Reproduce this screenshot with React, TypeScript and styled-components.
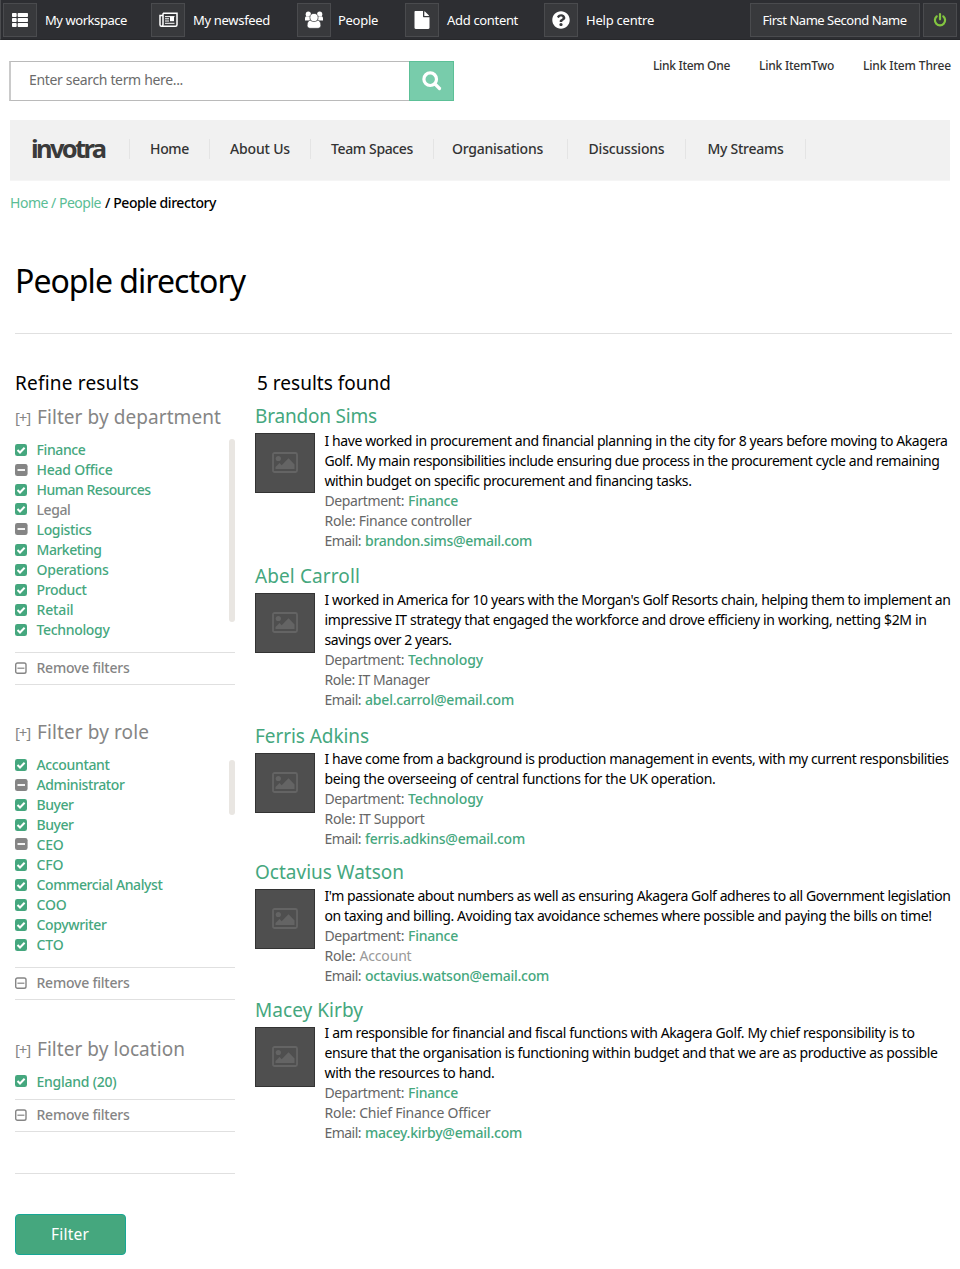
import React, { useLayoutEffect, useRef, useState } from "react";
import styled, { createGlobalStyle } from "styled-components";
import { FaThList, FaQuestionCircle } from "react-icons/fa";

const green = "#45a77e";
const grey = "#858585";

const GlobalStyle = createGlobalStyle`
  * { box-sizing: border-box; }
  body {
    margin: 0;
    background: #fff;
    color: #000;
    font-family: "Noto Sans", "Open Sans", sans-serif;
    font-size: 14px;
    line-height: 20px;
  }
  h1, h2, h3, p, ul { margin: 0; padding: 0; font-weight: 400; }
  ul { list-style: none; }
`;

/* A line of text tracked in or out so that it fills a given measure. */
const Line = styled.span<{ $width: number }>`
  display: block;
  flex: none;
  width: ${(p) => p.$width}px;
  white-space: nowrap;
`;

function Fit({ w, children }: { w: number; children: string }) {
  const ref = useRef<HTMLSpanElement>(null);
  const [tracking, setTracking] = useState(0);
  useLayoutEffect(() => {
    const el = ref.current;
    if (!el) return;
    const natural = el.getBoundingClientRect().width - tracking * children.length;
    setTracking((w - 1 - natural) / children.length);
  }, [w, children]);
  return (
    <Line $width={w}>
      <span ref={ref} style={{ letterSpacing: `${tracking}px` }}>
        {children}
      </span>
    </Line>
  );
}

const Page = styled.div`
  width: 960px;
  height: 1269px;
  overflow: hidden;
`;

/* ---------- top bar ---------- */

const TopBar = styled.div`
  display: flex;
  height: 40px;
  padding: 3px 3px 3px 2px;
  background: #2d2e32;
  border-left: 1px solid #4b4c4f;
  border-bottom: 1px solid #27282b;
  color: #fff;
  font-size: 13px;
`;

const Shortcut = styled.div<{ $width: number; $gap: number }>`
  display: flex;
  align-items: center;
  gap: ${(p) => p.$gap}px;
  width: ${(p) => p.$width}px;
  height: 34px;
`;

const Tile = styled.div<{ $width?: number; $color?: string }>`
  display: flex;
  flex: none;
  align-items: center;
  justify-content: center;
  width: ${(p) => p.$width ?? 34}px;
  height: 34px;
  background: #38393c;
  border: 1px solid #4a4b4e;
  color: ${(p) => p.$color ?? "#fff"};
`;

const Account = styled.div`
  display: flex;
  gap: 3px;
  margin-left: auto;
`;

const NewsIcon = () => (
  <svg width="19" height="16" viewBox="0 0 19 16" fill="none" stroke="#fff" strokeWidth="1.500">
    <path d="M4 1.200h14v11.600c0 1-.6 1.500-1.500 1.500h-14C1.500 14.300 1 13.700 1 12.800V3.400h3M4 1.200v11.300c0 1-.4 1.700-1.400 1.800" />
    <rect x="11" y="4.800" width="4" height="4.400" fill="#fff" stroke="none" />
    <path d="M6 4.600h9.500M6 6.800h4M6 9h4M6 11.300h9.500" strokeWidth="1" />
  </svg>
);

const PeopleIcon = () => (
  <svg width="20" height="18" viewBox="0 0 20 18" fill="#fff">
    <circle cx="4.3" cy="3.2" r="2.6" />
    <circle cx="15.7" cy="3.2" r="2.6" />
    <path d="M1 9.5V7.8C1 6 2 5.2 3 5.4c1.400.8 2.400.6 3.200.3L6 9.500z" />
    <path d="M19 9.500V7.800c0-1.800-1-2.600-2-2.400-1.400.8-2.400.6-3.200.3L14 9.500z" />
    <path
      d="M5.800 9.300C4 10 3.200 12 3.200 14.300c0 2 1.200 3 2.800 3h8c1.600 0 2.800-1 2.800-3 0-2.300-.8-4.300-2.600-5z"
      stroke="#38393c"
      strokeWidth=".6"
    />
    <circle cx="10" cy="6.500" r="4.100" stroke="#38393c" strokeWidth=".7" />
  </svg>
);

const FileIcon = () => (
  <svg width="16" height="18" viewBox="0 0 16 18" fill="#fff">
    <path d="M1.500 0H9v5.300c0 .6.400 1 1 1h5.500v10.400c0 .7-.5 1.200-1.200 1.200H1.700C1 17.900.5 17.400.5 16.700V1C.5.400.900 0 1.500 0z" />
    <path d="M10.300 0.200c.4.100.6.300.9.600l3.300 3.300c.3.300.5.600.6.900h-4.800z" />
  </svg>
);

const PowerIcon = () => (
  <svg width="14" height="14" viewBox="0 0 14 14" fill="none" stroke="currentColor" strokeWidth="2.200" strokeLinecap="round">
    <path d="M3.700 3.300a5.100 5.100 0 1 0 6.600 0M7 1.100v5.200" />
  </svg>
);

/* ---------- search and quick links ---------- */

const SearchRow = styled.div`
  display: flex;
  justify-content: space-between;
  height: 80px;
  padding: 21px 8px 0 9px;
`;

const SearchForm = styled.div`
  display: flex;
  height: 40px;
`;

const SearchField = styled.div`
  display: flex;
  align-items: center;
  width: 400px;
  padding: 0 0 3px 18px;
  border: 1px solid #bababa;
  border-left: 2px solid #cacaca;
  border-right: 0;
  color: #6b6b6b;
`;

const SearchButton = styled.div`
  display: flex;
  align-items: center;
  justify-content: center;
  width: 45px;
  background: #78ccab;
  border: 1px solid #5cc097;
`;

const QuickLinks = styled.div`
  display: flex;
  gap: 28px;
  height: 20px;
  margin-top: -6px;
  color: #333;
  font-size: 12px;
  font-weight: 500;
  line-height: 21px;
`;

/* ---------- main navigation ---------- */

const MainNav = styled.nav`
  display: flex;
  align-items: center;
  width: 940px;
  height: 61px;
  margin-left: 10px;
  padding: 0 0 2px 22px;
  background: #f1f1f1;
  border-bottom: 1px solid #f5f5f5;
  color: #333;
  font-weight: 500;
`;

const Logo = styled.svg`
  flex: none;
  width: 97px;
  height: 40px;
`;

const NavItem = styled.div<{ $width: number; $pad: number }>`
  width: ${(p) => p.$width}px;
  height: 20px;
  padding-left: ${(p) => p.$pad}px;
  border-left: 1px solid #e4e4e4;
`;

const Crumbs = styled.div`
  display: flex;
  gap: 3px;
  height: 20px;
  margin: 12px 0 0 10px;
`;

const CrumbLink = styled.div`
  color: #5abd95;
`;

const CrumbHere = styled.div`
  font-weight: 500;
`;

const Title = styled.h1`
  height: 44px;
  margin: 46px 15px 0;
  font-size: 32px;
  line-height: 44px;
`;

const Rule = styled.div<{ $top: number; $wide?: boolean }>`
  height: 1px;
  margin: ${(p) => p.$top}px 0 0 ${(p) => (p.$wide ? 15 : 0)}px;
  width: ${(p) => (p.$wide ? 937 : 220)}px;
  background: #e0e0e0;
`;

const Columns = styled.div`
  display: flex;
  gap: 20px;
  padding: 37px 0 0 15px;
`;

const ColumnTitle = styled.h2<{ $indent: number }>`
  height: 24px;
  padding-left: ${(p) => p.$indent}px;
  font-size: 19px;
  line-height: 24px;
`;

/* ---------- filters ---------- */

const Sidebar = styled.aside`
  width: 220px;
`;

const FilterTitle = styled.h3<{ $top: number }>`
  display: flex;
  gap: 6px;
  height: 24px;
  margin-top: ${(p) => p.$top}px;
  color: ${grey};
  font-size: 19px;
  line-height: 24px;
`;

const Toggle = styled.span`
  font-size: 15px;
`;

const FilterBody = styled.div<{ $top: number }>`
  display: flex;
  justify-content: space-between;
  margin-top: ${(p) => p.$top}px;
`;

const Option = styled.li<{ $muted?: boolean }>`
  display: flex;
  gap: 8.5px;
  height: 20px;
  color: ${(p) => (p.$muted ? grey : green)};
  font-weight: 500;
`;

const Mark = styled.svg<{ $raised?: boolean }>`
  flex: none;
  width: 13px;
  height: 13px;
  margin-top: ${(p) => (p.$raised ? 3 : 4)}px;
`;

const ScrollThumb = styled.div<{ $top: number; $height: number }>`
  width: 6px;
  height: ${(p) => p.$height}px;
  margin-top: ${(p) => p.$top}px;
  border-radius: 3px;
  background: #e9e6e2;
`;

const RemoveRow = styled.div<{ $top: number }>`
  display: flex;
  gap: 8.5px;
  height: 33px;
  margin-top: ${(p) => p.$top}px;
  padding-top: 5px;
  border: solid #e0e0e0;
  border-width: 1px 0;
  color: ${grey};
  font-weight: 500;
`;

const FilterButton = styled.div`
  display: flex;
  justify-content: center;
  width: 111px;
  height: 41px;
  margin-top: 40px;
  padding-top: 9px;
  border: 1px solid #17a795;
  border-radius: 4px;
  background: ${green};
  color: #fff;
  font-size: 15.5px;
`;

/* ---------- results ---------- */

const Results = styled.main`
  width: 705px;
`;

const PersonList = styled.div`
  margin-top: 9px;
`;

const Person = styled.article<{ $height: number }>`
  height: ${(p) => p.$height}px;
`;

const PersonName = styled.h3`
  height: 22px;
  color: ${green};
  font-size: 19px;
  line-height: 24px;
`;

const PersonBody = styled.div`
  display: flex;
  gap: 10px;
`;

const Thumb = styled.div`
  display: flex;
  align-items: center;
  justify-content: center;
  flex: none;
  width: 60px;
  height: 60px;
  margin-top: 7px;
  padding-bottom: 2px;
  border: 1px solid #333;
  background: #4f4f4f;
`;

const Details = styled.div<{ $top: number }>`
  margin-top: ${(p) => p.$top}px;
  margin-left: -0.5px;
`;

const Fact = styled.div`
  display: flex;
  gap: 3px;
  color: #666;
`;

const FactLink = styled.span`
  color: ${green};
  font-weight: 500;
`;

const Faded = styled.span`
  color: #999;
`;

type OptionData = { label: string; w: number; partial?: boolean; muted?: boolean; raised?: boolean };

const departments: OptionData[] = [
  { label: "Finance", w: 50 },
  { label: "Head Office", w: 77, partial: true },
  { label: "Human Resources", w: 115 },
  { label: "Legal", w: 35, muted: true, raised: true },
  { label: "Logistics", w: 56, partial: true, raised: true },
  { label: "Marketing", w: 66 },
  { label: "Operations", w: 73 },
  { label: "Product", w: 51 },
  { label: "Retail", w: 38 },
  { label: "Technology", w: 74 },
];

const roles: OptionData[] = [
  { label: "Accountant", w: 74 },
  { label: "Administrator", w: 89, partial: true },
  { label: "Buyer", w: 38 },
  { label: "Buyer", w: 38 },
  { label: "CEO", w: 28, partial: true, raised: true },
  { label: "CFO", w: 28 },
  { label: "Commercial Analyst", w: 127 },
  { label: "COO", w: 31 },
  { label: "Copywriter", w: 71 },
  { label: "CTO", w: 28 },
];

const places: OptionData[] = [{ label: "England (20)", w: 81, raised: true }];

function OptionRow({ o }: { o: OptionData }) {
  return (
    <Option $muted={o.muted}>
      <Mark $raised={o.raised} viewBox="0 0 13 13">
        <rect width={o.partial ? 12.6 : 12} height="12" rx="2.3" fill={o.partial ? grey : green} />
        {o.partial ? (
          <path d="M2.500 6h7.500" stroke="#fff" strokeWidth="1.800" />
        ) : (
          <path d="M2.500 6l2.500 2.500 4.600-4.700" fill="none" stroke="#fff" strokeWidth="2" />
        )}
      </Mark>
      <Fit w={o.w}>{o.label}</Fit>
    </Option>
  );
}

function RemoveFilters({ top }: { top: number }) {
  return (
    <RemoveRow $top={top}>
      <Mark viewBox="0 0 13 13" fill="none" stroke={grey}>
        <rect x=".7" y="1" width="10.300" height="10.300" rx="1.800" strokeWidth="1.400" />
        <path d="M2.400 6.200h7" strokeWidth="1.200" />
      </Mark>
      <Fit w={94}>Remove filters</Fit>
    </RemoveRow>
  );
}

function FilterHeading({ top, w, children }: { top: number; w: number; children: string }) {
  return (
    <FilterTitle $top={top}>
      <Toggle>
        <Fit w={16}>[+]</Fit>
      </Toggle>
      <Fit w={w}>{children}</Fit>
    </FilterTitle>
  );
}

type PersonData = {
  name: string;
  nameW: number;
  height: number;
  top: number;
  lines: [string, number][];
  dept: [string, number];
  role: [string, number];
  fadedRole?: boolean;
  email: [string, number];
};

const people: PersonData[] = [
  {
    name: "Brandon Sims", nameW: 123, height: 160, top: 5,
    lines: [
      ["I have worked in procurement and financial planning in the city for 8 years before moving to Akagera", 624],
      ["Golf. My main responsibilities include ensuring due process in the procurement cycle and remaining", 616],
      ["within budget on specific procurement and financing tasks.", 368],
    ],
    dept: ["Finance", 51], role: ["Role: Finance controller", 148], email: ["brandon.sims@email.com", 168],
  },
  {
    name: "Abel Carroll", nameW: 106, height: 160, top: 4,
    lines: [
      ["I worked in America for 10 years with the Morgan's Golf Resorts chain, helping them to implement an", 627],
      ["impressive IT strategy that engaged the workforce and drove efficieny in working, netting $2M in", 603],
      ["savings over 2 years.", 128],
    ],
    dept: ["Technology", 76], role: ["Role: IT Manager", 106], email: ["abel.carrol@email.com", 150],
  },
  {
    name: "Ferris Adkins", nameW: 115, height: 136, top: 3,
    lines: [
      ["I have come from a background is production management in events, with my current responsbilities", 625],
      ["being the overseeing of central functions for the UK operation.", 392],
    ],
    dept: ["Technology", 76], role: ["Role: IT Support", 101], email: ["ferris.adkins@email.com", 161],
  },
  {
    name: "Octavius Watson", nameW: 150, height: 138, top: 4,
    lines: [
      ["I'm passionate about numbers as well as ensuring Akagera Golf adheres to all Government legislation", 627],
      ["on taxing and billing. Avoiding tax avoidance schemes where possible and paying the bills on time!", 608],
    ],
    dept: ["Finance", 51], role: ["Account", 53], fadedRole: true, email: ["octavius.watson@email.com", 185],
  },
  {
    name: "Macey Kirby", nameW: 109, height: 150, top: 3,
    lines: [
      ["I am responsible for financial and fiscal functions with Akagera Golf. My chief responsibility is to", 591],
      ["ensure that the organisation is functioning within budget and that we are as productive as possible", 614],
      ["with the resources to hand.", 171],
    ],
    dept: ["Finance", 51], role: ["Role: Chief Finance Officer", 167], email: ["macey.kirby@email.com", 158],
  },
];

function PersonCard({ p }: { p: PersonData }) {
  return (
    <Person $height={p.height}>
      <PersonName>
        <Fit w={p.nameW}>{p.name}</Fit>
      </PersonName>
      <PersonBody>
        <Thumb>
          <svg width="26" height="21" viewBox="0 0 26 21">
            <rect x="1" y="1" width="24" height="19" rx="1.500" fill="none" stroke="#646464" strokeWidth="1.800" />
            <circle cx="6.300" cy="6.500" r="2.600" fill="#646464" />
            <path d="M3.500 17v-2l4-4 2.200 2.200 6.800-7 6 6.300V17z" fill="#646464" />
          </svg>
        </Thumb>
        <Details $top={p.top}>
          {p.lines.map(([text, w]) => (
            <Fit key={text} w={w}>{text}</Fit>
          ))}
          <Fact>
            <Fit w={80.5}>Department:</Fit>
            <FactLink><Fit w={p.dept[1]}>{p.dept[0]}</Fit></FactLink>
          </Fact>
          <Fact>
            {p.fadedRole ? (
              <>
                <Fit w={32}>Role:</Fit>
                <Faded><Fit w={p.role[1]}>{p.role[0]}</Fit></Faded>
              </>
            ) : (
              <Fit w={p.role[1]}>{p.role[0]}</Fit>
            )}
          </Fact>
          <Fact>
            <Fit w={37.5}>Email:</Fit>
            <FactLink><Fit w={p.email[1]}>{p.email[0]}</Fit></FactLink>
          </Fact>
        </Details>
      </PersonBody>
    </Person>
  );
}

export default function App() {
  return (
    <Page>
      <GlobalStyle />
      <TopBar>
        <Shortcut $width={148} $gap={8}>
          <Tile><FaThList size={16} /></Tile>
          <Fit w={83}>My workspace</Fit>
        </Shortcut>
        <Shortcut $width={146} $gap={8}>
          <Tile><NewsIcon /></Tile>
          <Fit w={78}>My newsfeed</Fit>
        </Shortcut>
        <Shortcut $width={108} $gap={7}>
          <Tile><PeopleIcon /></Tile>
          <Fit w={41}>People</Fit>
        </Shortcut>
        <Shortcut $width={139} $gap={8}>
          <Tile><FileIcon /></Tile>
          <Fit w={72}>Add content</Fit>
        </Shortcut>
        <Shortcut $width={120} $gap={8}>
          <Tile><FaQuestionCircle size={18} /></Tile>
          <Fit w={69}>Help centre</Fit>
        </Shortcut>
        <Account>
          <Tile $width={170}><Fit w={145}>First Name Second Name</Fit></Tile>
          <Tile $color="#83c540"><PowerIcon /></Tile>
        </Account>
      </TopBar>

      <SearchRow>
        <SearchForm>
          <SearchField><Fit w={155}>Enter search term here...</Fit></SearchField>
          <SearchButton>
            <svg width="20" height="20" viewBox="0 0 20 20" fill="none" stroke="#fff" strokeWidth="3.200">
              <circle cx="8.200" cy="8.200" r="6.300" />
              <path d="M13 13l4.500 4.500" strokeLinecap="round" />
            </svg>
          </SearchButton>
        </SearchForm>
        <QuickLinks>
          <Fit w={78}>Link Item One</Fit>
          <Fit w={76}>Link ItemTwo</Fit>
          <Fit w={89}>Link Item Three</Fit>
        </QuickLinks>
      </SearchRow>

      <MainNav>
        <Logo viewBox="0 0 97 40">
          <text x="-1" y="29" fontSize="25.5" fontWeight="700" fill="#3a3a3a" textLength="76" lengthAdjust="spacing">
            invotra
          </text>
        </Logo>
        <NavItem $width={80} $pad={20}><Fit w={40}>Home</Fit></NavItem>
        <NavItem $width={101} $pad={20}><Fit w={61}>About Us</Fit></NavItem>
        <NavItem $width={123} $pad={20}><Fit w={83}>Team Spaces</Fit></NavItem>
        <NavItem $width={134} $pad={18}><Fit w={92}>Organisations</Fit></NavItem>
        <NavItem $width={118} $pad={20.5}><Fit w={77}>Discussions</Fit></NavItem>
        <NavItem $width={120} $pad={21.5}><Fit w={77}>My Streams</Fit></NavItem>
        <NavItem $width={1} $pad={0} />
      </MainNav>

      <Crumbs>
        <CrumbLink><Fit w={92}>Home / People</Fit></CrumbLink>
        <CrumbHere><Fit w={112}>/ People directory</Fit></CrumbHere>
      </Crumbs>

      <Title><Fit w={231}>People directory</Fit></Title>
      <Rule $top={30} $wide />

      <Columns>
        <Sidebar>
          <ColumnTitle $indent={0}><Fit w={125}>Refine results</Fit></ColumnTitle>

          <FilterHeading top={10} w={185}>Filter by department</FilterHeading>
          <FilterBody $top={11}>
            <ul>{departments.map((o, i) => <OptionRow key={i} o={o} />)}</ul>
            <ScrollThumb $top={-1} $height={183} />
          </FilterBody>
          <RemoveFilters top={12} />

          <FilterHeading top={35} w={113}>Filter by role</FilterHeading>
          <FilterBody $top={11}>
            <ul>{roles.map((o, i) => <OptionRow key={i} o={o} />)}</ul>
            <ScrollThumb $top={5} $height={55} />
          </FilterBody>
          <RemoveFilters top={12} />

          <FilterHeading top={37} w={149}>Filter by location</FilterHeading>
          <FilterBody $top={11}>
            <ul>{places.map((o, i) => <OptionRow key={i} o={o} />)}</ul>
          </FilterBody>
          <RemoveFilters top={7} />

          <Rule $top={41} />
          <FilterButton><Fit w={39}>Filter</Fit></FilterButton>
        </Sidebar>

        <Results>
          <ColumnTitle $indent={2}><Fit w={135}>5 results found</Fit></ColumnTitle>
          <PersonList>
            {people.map((p) => <PersonCard key={p.name} p={p} />)}
          </PersonList>
        </Results>
      </Columns>
    </Page>
  );
}
